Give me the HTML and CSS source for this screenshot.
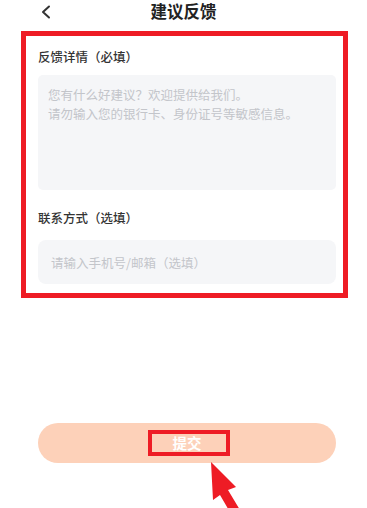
FILE: index.html
```html
<!DOCTYPE html>
<html lang="zh-CN">
<head>
<meta charset="utf-8">
<title>建议反馈</title>
<link rel="stylesheet" href="styles.css">
</head>
<body>
<div class="page">
  <header class="topbar">
    <svg class="back" width="12" height="14" viewBox="0 0 12 14"><polyline points="9,1.5 3,7 9,12.5" fill="none" stroke="#333" stroke-width="2" stroke-linecap="round" stroke-linejoin="round"/></svg>
    <h1 class="title">建议反馈</h1>
  </header>
  <section class="form-mark">
    <div class="label">反馈详情（必填）</div>
    <div class="textarea">
      <p>您有什么好建议？欢迎提供给我们。</p>
      <p>请勿输入您的银行卡、身份证号等敏感信息。</p>
    </div>
    <div class="label label2">联系方式（选填）</div>
    <div class="input">请输入手机号/邮箱（选填）</div>
  </section>
  <div class="btn-wrap">
    <div class="submit"><span class="submit-text">提交</span></div>
  </div>
  <svg class="arrow" width="60" height="60" viewBox="0 0 60 60">
    <polygon points="16,7 41,32 33,35 48,60 39,64 25,40 18,45" fill="#ee1c25"/>
  </svg>
</div>
</body>
</html>
```
FILE: styles.css
```css
html, body {
  margin: 0;
  padding: 0;
  background: #fff;
}
body {
  font-family: "Noto Sans CJK SC", "Noto Sans", sans-serif;
  color: #333;
}
.page {
  position: relative;
  width: 367px;
  height: 508px;
  overflow: hidden;
}
.topbar {
  position: relative;
  height: 22px;
  display: flex;
  align-items: center;
  justify-content: center;
  margin-top: 0;
}
.back {
  position: absolute;
  left: 40px;
  top: 5px;
}
.title {
  margin: 0;
  font-size: 16.5px;
  font-weight: 700;
  line-height: 20px;
  color: #222;
}
.form-mark {
  margin: 9px 19px 0 21px;
  border: 5px solid #ee1c25;
  padding: 12px 7px 9px 12px;
}
.label {
  font-size: 12.5px;
  line-height: 18px;
  font-weight: 500;
  color: #333;
}
.textarea {
  margin-top: 9px;
  height: 115px;
  box-sizing: border-box;
  background: #f5f6f8;
  border-radius: 5px;
  padding: 10px 10px;
}
.textarea p {
  margin: 0;
  font-size: 12.5px;
  line-height: 19px;
  color: #c3c5ca;
}
.label2 {
  margin-top: 19px;
}
.input {
  margin-top: 13px;
  height: 44px;
  box-sizing: border-box;
  background: #f5f6f8;
  border-radius: 8px;
  padding: 0 13px;
  display: flex;
  align-items: center;
  font-size: 12.5px;
  color: #c3c5ca;
}
.btn-wrap {
  padding: 125px 31px 0 38px;
}
.submit {
  height: 40px;
  border-radius: 20px;
  background: #fdd1b9;
  display: flex;
  align-items: center;
  justify-content: center;
}
.submit-text {
  box-sizing: border-box;
  width: 82px;
  height: 26px;
  margin-left: 4px;
  border: 4px solid #ee1c25;
  display: flex;
  align-items: center;
  justify-content: center;
  color: #fff;
  font-size: 14.5px;
  font-weight: 700;
  line-height: 1;
  padding-right: 4px;
}
.arrow {
  position: absolute;
  left: 195px;
  top: 455px;
}
```
